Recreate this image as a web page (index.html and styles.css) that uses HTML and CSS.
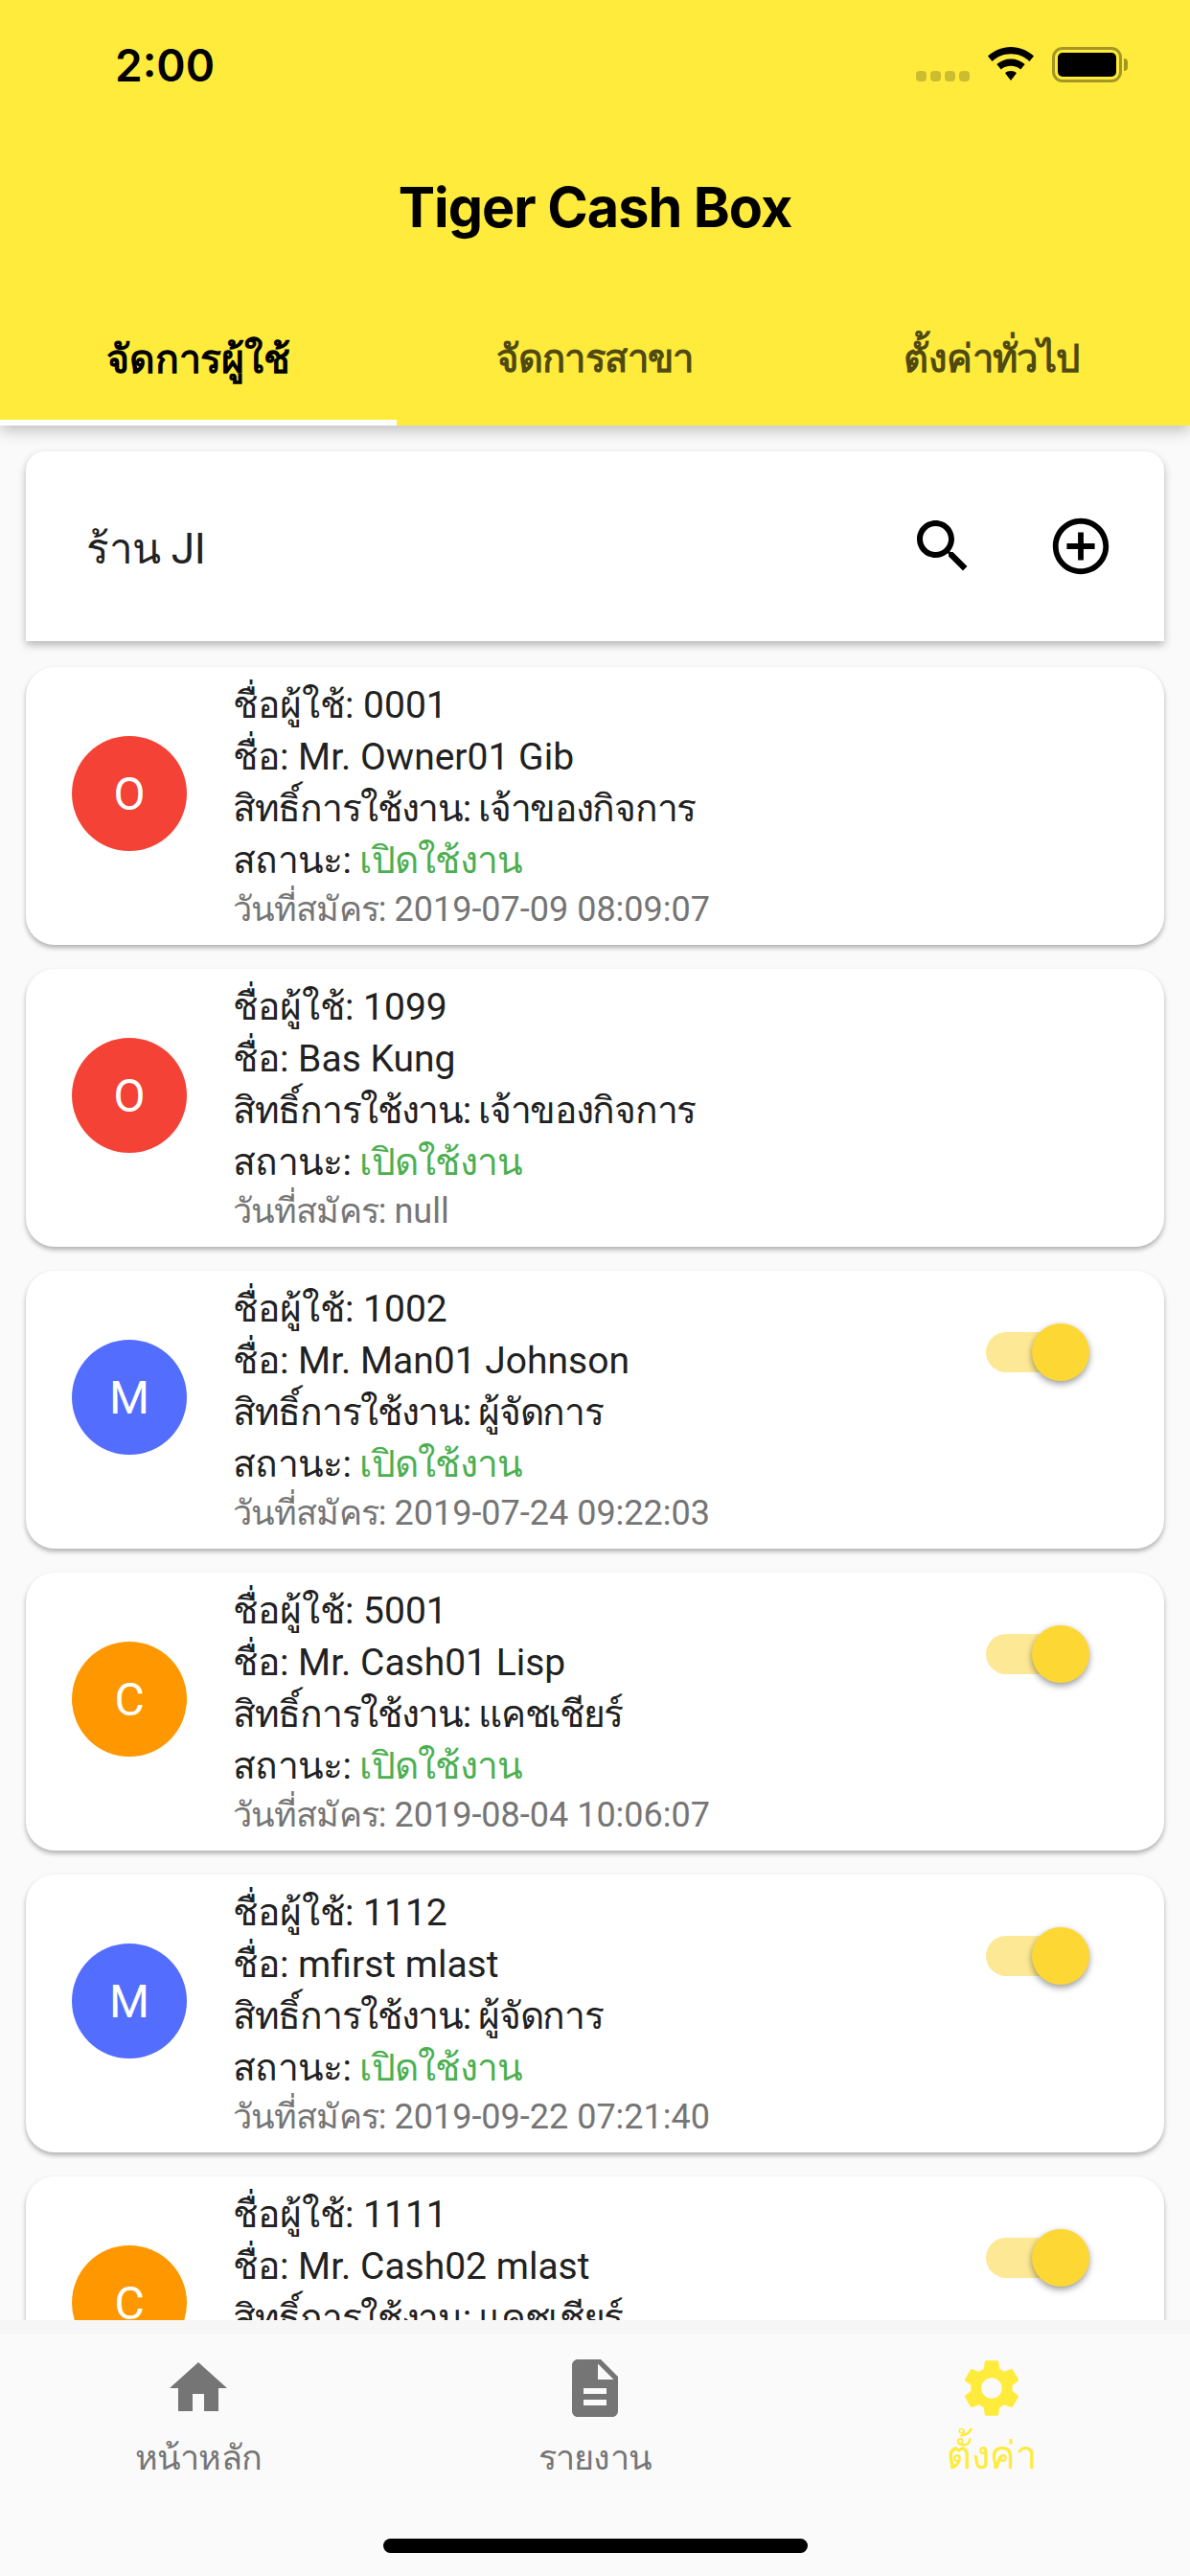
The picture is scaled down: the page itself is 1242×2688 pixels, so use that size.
FILE: index.html
```html
<!DOCTYPE html>
<html lang="th">
<head>
  <meta charset="UTF-8">
  <meta name="viewport" content="width=device-width, initial-scale=1.0">
  <title>Tiger Cash Box</title>
  <link rel="stylesheet" href="styles.css">
</head>
<body>

  <header class="header">
    <!-- Status bar -->
    <div class="status-bar">
      <span class="time">2:00</span>
      <div class="status-icons">
        <div class="signal"><i></i><i></i><i></i><i></i></div>
        <svg class="wifi" viewBox="0 0 48 36"><path d="M24 0C15 0 7 3.500 0 9.500L4.500 15C10 10 16.500 7.300 24 7.300S38 10 43.500 15L48 9.500C41 3.500 33 0 24 0ZM24 12.500C18.500 12.500 13.500 14.500 9.300 18L13.800 23.500C16.500 21 20 19.800 24 19.800S31.500 21 34.200 23.500L38.700 18C34.500 14.500 29.500 12.500 24 12.500ZM24 25C21.600 25 19.600 25.800 18 27.200L24 35L30 27.200C28.400 25.800 26.400 25 24 25Z"/></svg>
        <div class="battery"><div class="battery-fill"></div></div>
        <div class="battery-cap"></div>
      </div>
    </div>
    <h1 class="title">Tiger Cash Box</h1>
    <nav class="tabs">
      <div class="tab active">จัดการผู้ใช้</div>
      <div class="tab">จัดการสาขา</div>
      <div class="tab">ตั้งค่าทั่วไป</div>
    </nav>
  </header>

  <main class="content">
    <div class="search-card">
      <span class="shop-name">ร้าน JI</span>
      <svg class="search-icon" viewBox="0 0 24 24"><path d="M15.500 14h-.79l-.28-.27C15.410 12.590 16 11.110 16 9.500 16 5.910 13.090 3 9.500 3S3 5.910 3 9.500 5.910 16 9.500 16c1.610 0 3.090-.59 4.230-1.570l.27.28v.79l5 4.990L20.490 19l-4.990-5zm-6 0C7.010 14 5 11.990 5 9.500S7.010 5 9.500 5 14 7.010 14 9.500 11.990 14 9.500 14z"/></svg>
      <svg class="add-icon" viewBox="0 0 24 24"><path d="M13 7h-2v4H7v2h4v4h2v-4h4v-2h-4V7zm-1-5C6.480 2 2 6.480 2 12s4.480 10 10 10 10-4.480 10-10S17.520 2 12 2zm0 18c-4.410 0-8-3.590-8-8s3.590-8 8-8 8 3.590 8 8-3.590 8-8 8z"/></svg>
    </div>

    <div class="user-card">
      <div class="avatar red">O</div>
      <div class="user-info">
        <div>ชื่อผู้ใช้: 0001</div>
        <div>ชื่อ: Mr. Owner01 Gib</div>
        <div class="tight">สิทธิ์การใช้งาน: เจ้าของกิจการ</div>
        <div class="status">สถานะ: <span class="on">เปิดใช้งาน</span></div>
        <div class="date"><span class="date-label">วันที่สมัคร:</span> 2019-07-09 08:09:07</div>
      </div>
    </div>

    <div class="user-card">
      <div class="avatar red">O</div>
      <div class="user-info">
        <div>ชื่อผู้ใช้: 1099</div>
        <div>ชื่อ: Bas Kung</div>
        <div class="tight">สิทธิ์การใช้งาน: เจ้าของกิจการ</div>
        <div class="status">สถานะ: <span class="on">เปิดใช้งาน</span></div>
        <div class="date"><span class="date-label">วันที่สมัคร:</span> null</div>
      </div>
    </div>

    <div class="user-card">
      <div class="avatar blue">M</div>
      <div class="user-info">
        <div>ชื่อผู้ใช้: 1002</div>
        <div>ชื่อ: Mr. Man01 Johnson</div>
        <div class="tight">สิทธิ์การใช้งาน: ผู้จัดการ</div>
        <div class="status">สถานะ: <span class="on">เปิดใช้งาน</span></div>
        <div class="date"><span class="date-label">วันที่สมัคร:</span> 2019-07-24 09:22:03</div>
      </div>
      <div class="toggle"><div class="toggle-thumb"></div></div>
    </div>

    <div class="user-card">
      <div class="avatar orange">C</div>
      <div class="user-info">
        <div>ชื่อผู้ใช้: 5001</div>
        <div>ชื่อ: Mr. Cash01 Lisp</div>
        <div class="tight">สิทธิ์การใช้งาน: แคชเชียร์</div>
        <div class="status">สถานะ: <span class="on">เปิดใช้งาน</span></div>
        <div class="date"><span class="date-label">วันที่สมัคร:</span> 2019-08-04 10:06:07</div>
      </div>
      <div class="toggle"><div class="toggle-thumb"></div></div>
    </div>

    <div class="user-card">
      <div class="avatar blue">M</div>
      <div class="user-info">
        <div>ชื่อผู้ใช้: 1112</div>
        <div>ชื่อ: mfirst mlast</div>
        <div class="tight">สิทธิ์การใช้งาน: ผู้จัดการ</div>
        <div class="status">สถานะ: <span class="on">เปิดใช้งาน</span></div>
        <div class="date"><span class="date-label">วันที่สมัคร:</span> 2019-09-22 07:21:40</div>
      </div>
      <div class="toggle"><div class="toggle-thumb"></div></div>
    </div>

    <div class="user-card">
      <div class="avatar orange">C</div>
      <div class="user-info">
        <div>ชื่อผู้ใช้: 1111</div>
        <div>ชื่อ: Mr. Cash02 mlast</div>
        <div class="tight">สิทธิ์การใช้งาน: แคชเชียร์</div>
      </div>
      <div class="toggle"><div class="toggle-thumb"></div></div>
    </div>
  </main>

  <!-- Bottom navigation -->
  <footer class="bottom-nav">
    <div class="nav-items">
      <div class="nav-item">
        <svg viewBox="0 0 24 24"><path d="M10 20v-6h4v6h5v-8h3L12 3 2 12h3v8z"/></svg>
        <span>หน้าหลัก</span>
      </div>
      <div class="nav-item">
        <svg viewBox="0 0 24 24"><path d="M14 2H6c-1.100 0-1.990.9-1.990 2L4 20c0 1.100.89 2 1.990 2H18c1.100 0 2-.9 2-2V8l-6-6zm2 16H8v-2h8v2zm0-4H8v-2h8v2zm-3-5V3.500L18.500 9H13z"/></svg>
        <span>รายงาน</span>
      </div>
      <div class="nav-item active">
        <svg viewBox="0 0 24 24"><path d="M19.140 12.940c.04-.3.060-.61.060-.94 0-.32-.02-.64-.07-.94l2.030-1.580c.18-.14.230-.41.120-.61l-1.920-3.320c-.12-.22-.37-.29-.59-.22l-2.390.96c-.5-.38-1.030-.7-1.620-.94l-.36-2.540c-.04-.24-.24-.41-.48-.41h-3.840c-.24 0-.43.170-.47.410l-.36 2.540c-.59.240-1.130.570-1.620.94l-2.390-.96c-.22-.08-.47 0-.59.220L2.740 8.870c-.12.210-.08.470.12.610l2.030 1.580c-.05.3-.09.630-.09.940s.02.640.07.940l-2.030 1.580c-.18.140-.23.410-.12.610l1.920 3.320c.12.220.37.290.59.220l2.390-.96c.5.380 1.030.7 1.620.94l.36 2.540c.05.240.24.410.48.410h3.840c.24 0 .44-.17.470-.41l.36-2.540c.59-.24 1.130-.56 1.620-.94l2.390.96c.22.080.47 0 .59-.22l1.920-3.320c.12-.22.070-.47-.12-.61l-2.010-1.580zM12 15.600c-1.980 0-3.600-1.620-3.600-3.600s1.620-3.600 3.600-3.600 3.600 1.620 3.600 3.600-1.620 3.600-3.600 3.600z"/></svg>
        <span>ตั้งค่า</span>
      </div>
    </div>
    <div class="home-indicator"></div>
  </footer>

</body>
</html>
```

FILE: styles.css
```css
* {
  box-sizing: border-box;
}
html, body {
  margin: 0;
  height: 2688px;
}
body {
  width: 1242px;
  display: flex;
  flex-direction: column;
  overflow: hidden;
  background-color: #fafafa;
  font-family: Roboto, "Noto Sans", sans-serif;
  color: #212121;
}

/* Header */
.header {
  height: 444px;
  flex-shrink: 0;
  background-color: #ffeb3b;
  box-shadow: 0 6px 14px rgba(0, 0, 0, 0.22);
  display: flex;
  flex-direction: column;
  position: relative;
  z-index: 2;
  color: #000;
}
.status-bar {
  height: 132px;
  padding: 41px 65px 0 120px;
  display: flex;
  justify-content: space-between;
  align-items: flex-start;
}
.time {
  font-family: Inter, sans-serif;
  font-size: 46px;
  font-weight: 600;
  line-height: 54px;
}
.status-icons {
  display: flex;
  align-items: flex-start;
  margin-top: 8px;
}
.signal {
  display: flex;
  gap: 4px;
  margin-top: 25px;
  margin-right: 19px;
}
.signal i {
  display: block;
  width: 11px;
  height: 11px;
  border-radius: 4px;
  background-color: rgba(0, 0, 0, 0.2);
}
.wifi {
  width: 48px;
  height: 36px;
  margin-right: 19px;
}
.battery {
  width: 73px;
  height: 37px;
  border: 3px solid rgba(0, 0, 0, 0.36);
  border-radius: 11px;
  padding: 3px;
}
.battery-fill {
  height: 100%;
  border-radius: 5px;
  background-color: #000;
}
.battery-cap {
  width: 4px;
  height: 13px;
  margin: 12px 0 0 2px;
  border-radius: 0 6px 6px 0;
  background-color: rgba(0, 0, 0, 0.36);
}
.title {
  height: 168px;
  margin: 0;
  text-align: center;
  font-family: Inter, sans-serif;
  font-size: 57.500px;
  font-weight: 700;
  line-height: 168px;
  letter-spacing: -1px;
}
.tabs {
  height: 144px;
  display: grid;
  grid-template-columns: repeat(3, 1fr);
  grid-template-rows: 144px;
}
.tab {
  text-align: center;
  font-size: 40px;
  font-weight: 700;
  letter-spacing: -0.6px;
  line-height: 150px;
  color: rgba(0, 0, 0, 0.7);
}
.tab.active {
  font-size: 41px;
  letter-spacing: -0.2px;
  color: #000;
  border-bottom: 6px solid #fff;
}

/* List */
.content {
  flex: 1;
  min-height: 0;
  overflow: hidden;
  padding: 27px 27px 0;
  display: flex;
  flex-direction: column;
  gap: 25px;
}
.search-card {
  height: 198px;
  flex-shrink: 0;
  margin-bottom: 2px;
  padding: 0 52px 0 63px;
  display: flex;
  align-items: center;
  gap: 73px;
  background-color: #fff;
  border-radius: 20px 20px 0 0;
  box-shadow: 0 4px 8px rgba(0, 0, 0, 0.28);
}
.shop-name {
  flex: 1;
  font-size: 44px;
  letter-spacing: -0.3px;
  padding-top: 4px;
}
.search-icon {
  width: 72px;
  height: 72px;
}
.add-icon {
  width: 70px;
  height: 70px;
}
.user-card {
  height: 290px;
  flex-shrink: 0;
  padding: 0 78px 0 48px;
  display: flex;
  align-items: center;
  background-color: #fff;
  border-radius: 30px;
  box-shadow: 0 3px 5px rgba(0, 0, 0, 0.3);
}
.avatar {
  width: 120px;
  height: 120px;
  flex-shrink: 0;
  margin-bottom: 26px;
  border-radius: 50%;
  display: flex;
  align-items: center;
  justify-content: center;
  font-size: 48px;
  color: #fff;
}
.avatar.red {
  background-color: #f44336;
}
.avatar.blue {
  background-color: #536dfe;
}
.avatar.orange {
  background-color: #ff9800;
}
.user-info {
  flex: 1;
  align-self: flex-start;
  margin-left: 48px;
  padding-top: 13px;
  font-size: 39px;
  line-height: 54px;
}
/* the Thai glyphs here run a bit wider than in the app */
.tight {
  letter-spacing: -1.3px;
}
.status {
  letter-spacing: -0.7px;
}
.on {
  color: #4caf50;
}
.date {
  font-size: 36px;
  line-height: 48px;
  color: #757575;
}
.date-label {
  letter-spacing: -0.9px;
}
.toggle {
  position: relative;
  width: 84px;
  height: 42px;
  align-self: flex-start;
  margin-top: 64px;
  margin-right: 24px;
  border-radius: 21px;
  background-color: #fde995;
}
.toggle-thumb {
  position: absolute;
  top: -9px;
  right: -24px;
  width: 60px;
  height: 60px;
  border-radius: 50%;
  background-color: #fdd835;
  box-shadow: 0 3px 7px rgba(0, 0, 0, 0.4);
}

/* Bottom navigation */
.bottom-nav {
  height: 267px;
  flex-shrink: 0;
  position: relative;
  z-index: 2;
  padding-top: 20px;
  background-color: #fafafa;
  border-top: 15px solid #f6f6f6;
}
.nav-items {
  display: grid;
  grid-template-columns: repeat(3, 1fr);
}
.nav-item {
  display: flex;
  flex-direction: column;
  align-items: center;
  font-size: 36px;
  letter-spacing: -0.8px;
  line-height: 50px;
  color: #757575;
}
.nav-item svg {
  width: 72px;
  height: 72px;
  fill: currentColor;
  margin-bottom: 12px;
}
.nav-item.active {
  font-size: 40px;
  letter-spacing: -0.4px;
  color: #ffeb3b;
}
.nav-item.active svg {
  margin-bottom: 10px;
}
.home-indicator {
  position: absolute;
  left: 400px;
  bottom: 24px;
  width: 443px;
  height: 15px;
  border-radius: 8px;
  background-color: #000;
}
```
